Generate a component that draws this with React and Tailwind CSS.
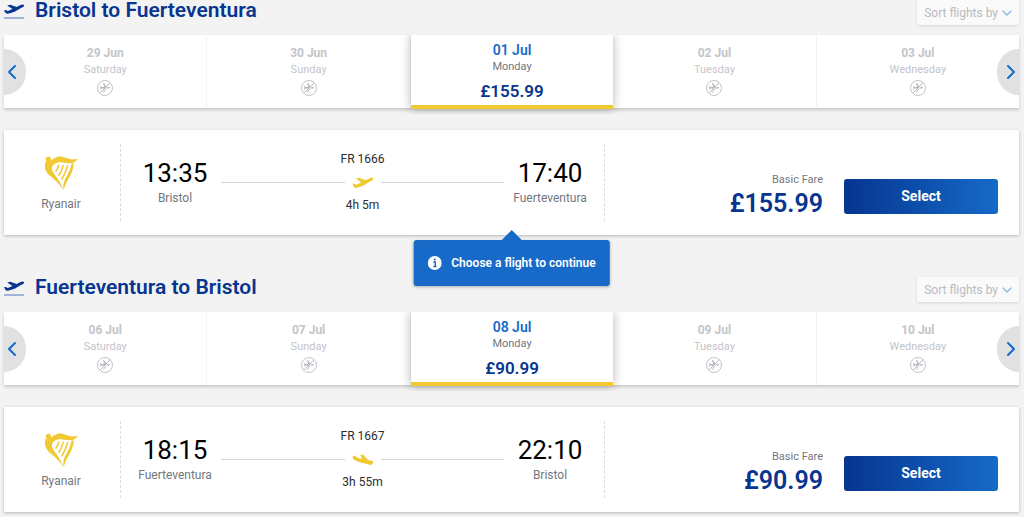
import { ChevronDown, ChevronLeft, ChevronRight } from "lucide-react";

const flights = [
  {
    id: "outbound",
    from: "Bristol",
    to: "Fuerteventura",
    number: "FR 1666",
    departs: "13:35",
    arrives: "17:40",
    duration: "4h 5m",
    price: "£155.99",
    hint: "Choose a flight to continue",
    days: [
      { date: "29 Jun", weekday: "Saturday" },
      { date: "30 Jun", weekday: "Sunday" },
      { date: "01 Jul", weekday: "Monday", price: "£155.99" },
      { date: "02 Jul", weekday: "Tuesday" },
      { date: "03 Jul", weekday: "Wednesday" },
    ],
  },
  {
    id: "inbound",
    from: "Fuerteventura",
    to: "Bristol",
    number: "FR 1667",
    departs: "18:15",
    arrives: "22:10",
    duration: "3h 55m",
    price: "£90.99",
    isReturn: true,
    days: [
      { date: "06 Jul", weekday: "Saturday" },
      { date: "07 Jul", weekday: "Sunday" },
      { date: "08 Jul", weekday: "Monday", price: "£90.99" },
      { date: "09 Jul", weekday: "Tuesday" },
      { date: "10 Jul", weekday: "Wednesday" },
    ],
  },
];

// planes are drawn on a 62 x 32 grid
const PLANE_UP =
  "M10 3l9-2 20 7 12-6c6-3 10-2 11 1 0 4-4 7-10 9L34 23c-9 4-18 7-25 8-3 0-4-2-5-4L0 19l5-1 7 4 14-7z";
const PLANE_DOWN =
  "M1 6l6-2 8 6 14 3-6-11 8-2 17 17 10 2c5 1 5 6 3 8-3 4-7 5-12 3L24 24C16 21 6 17 3 14 1 12 0 9 1 6z";

function TakeoffIcon() {
  return (
    <svg viewBox="0 0 20 20" className="h-5 w-5 shrink-0" aria-hidden="true">
      <path d={PLANE_UP} fill="#073590" transform="translate(0 4.5) scale(0.325 0.3)" />
      <path d="M0 18h20" stroke="#7d99cb" strokeWidth="1.4" />
    </svg>
  );
}

function RoutePlane({ isReturn }) {
  return (
    <svg viewBox="0 0 24 20" className="h-5 w-6" aria-hidden="true">
      <path
        d={isReturn ? PLANE_DOWN : PLANE_UP}
        fill="#f1c933"
        transform="translate(1.5 4.5) scale(0.335)"
      />
    </svg>
  );
}

function NoFlightIcon() {
  return (
    <svg viewBox="0 0 18 18" className="h-[18px] w-[18px]" fill="none" aria-hidden="true">
      <circle cx="9" cy="9" r="7.5" stroke="#c2c5ca" />
      <path
        d="M21 16v-2l-8-5V3.500c0-.83-.67-1.500-1.500-1.500S10 2.670 10 3.500V9l-8 5v2l8-2.500V19l-2 1.500V22l3.500-1 3.500 1v-1.500L13 19v-5.500l8 2.500z"
        fill="#b4b8be"
        transform="rotate(90 9 9) translate(3 3) scale(0.5)"
      />
      <path d="M4.300 15L14.800 4.500" stroke="#fff" />
      <path d="M3.700 14.300L14.300 3.700" stroke="#b4b8be" />
    </svg>
  );
}

function HarpLogo() {
  return (
    <svg viewBox="0 0 100 100" className="h-[34px] w-[34px]" fill="none" aria-hidden="true">
      <circle cx="13" cy="10" r="8" fill="#f1c933" />
      <path
        d="M14 15C26 12 30 4 42 2c17-2 27 8 42 8 6 0 10-1 15-2-4 9-14 14-27 13-16-1-27-6-37 0-8 4-12 9-12 16 0 13 22 29 34 63C47 84 36 74 22 62 8 51 1 38 3 28 2 20 5 15 14 15z"
        fill="#f1c933"
      />
      <path d="M88 22c-2 18-8 33-17 47-6 10-10 19-13 31-3-12-1-22 5-34 8-14 15-26 18-44z" fill="#f1c933" />
      <path
        d="M44 25c-2 8-5 14-10 21M57 26c-3 12-7 22-14 32M70 27c-4 16-10 28-18 42"
        stroke="#f1c933"
        strokeWidth="4.500"
      />
    </svg>
  );
}

function InfoIcon() {
  return (
    <svg viewBox="0 0 14 14" className="h-3.5 w-3.5 shrink-0" aria-hidden="true">
      <circle cx="7" cy="7" r="7" fill="#fff" />
      <path d="M5.500 6h2v4.500M5.500 10.500h3.200" stroke="#176ac8" strokeWidth="1.400" fill="none" />
      <circle cx="7" cy="3.500" r="1" fill="#176ac8" />
    </svg>
  );
}

function Day({ date, weekday, price }) {
  if (price) {
    return (
      <li className="relative z-10 flex-1 [clip-path:inset(0_-12px_-6px)]">
        <button
          type="button"
          aria-pressed="true"
          className="flex h-[74px] w-full flex-col items-center border-b-4 border-[#f1c933] bg-white pt-1.5 shadow-[0_0_10px_rgba(0,0,0,0.3)]"
        >
          <span className="text-sm leading-[18px] font-semibold text-[#176ac8]">{date}</span>
          <span className="text-[11px] leading-4 text-[#737780]">{weekday}</span>
          <span className="mt-1.5 text-[17px] leading-5 font-semibold text-[#073590]">{price}</span>
        </button>
      </li>
    );
  }

  return (
    <li className="flex-1 border-r border-[#f4f4f4] last:border-r-0">
      <button
        type="button"
        disabled
        className="flex h-[73px] w-full flex-col items-center pt-[9px]"
      >
        <span className="text-xs leading-[18px] font-bold text-[#c2c5ca]">{date}</span>
        <span className="text-[11px] leading-4 text-[#c2c5ca]">{weekday}</span>
        <span className="mt-px">
          <NoFlightIcon />
        </span>
      </button>
    </li>
  );
}

function DateCarousel({ days }) {
  return (
    <div className="relative bg-white shadow-[0_2px_3px_rgba(0,0,0,0.18)]">
      <ul className="flex h-[73px]">
        {days.map((day) => (
          <Day key={day.date} {...day} />
        ))}
      </ul>
      <button
        type="button"
        aria-label="Previous dates"
        className="absolute top-3.5 left-0 flex h-[46px] w-[22px] items-center rounded-r-full bg-[#dfe1e3]"
      >
        <ChevronLeft className="-ml-1 h-6 w-6 shrink-0 text-[#176ac8]" strokeWidth={2} />
      </button>
      <button
        type="button"
        aria-label="Next dates"
        className="absolute top-3.5 right-0 flex h-[46px] w-[22px] items-center justify-end rounded-l-full bg-[#dfe1e3]"
      >
        <ChevronRight className="-mr-1 h-6 w-6 shrink-0 text-[#176ac8]" strokeWidth={2} />
      </button>
    </div>
  );
}

function Stop({ time, city }) {
  return (
    <div className="flex w-[92px] shrink-0 flex-col items-center pb-0.5">
      <span className="text-[26px] leading-[30px] text-black">{time}</span>
      <span className="mt-0.5 text-xs leading-4 text-[#737780]">{city}</span>
    </div>
  );
}

function FlightCard({ flight }) {
  return (
    <article className="relative flex h-[105px] bg-white py-3.5 shadow-[0_1px_3px_rgba(0,0,0,0.25)]">
      <div className="flex w-[117px] shrink-0 flex-col items-center border-r border-dashed border-[#dcdcdc] pt-3 pr-0.5">
        <HarpLogo />
        <span className="mt-1.5 text-xs leading-4 text-[#737780]">Ryanair</span>
      </div>

      <div className="flex flex-1 items-center border-r border-dashed border-[#dcdcdc] px-2">
        <Stop time={flight.departs} city={flight.from} />
        <div className="flex flex-1 flex-col items-center pb-0.5 text-xs leading-4 text-[#2b2d31]">
          <span>{flight.number}</span>
          <div className="mt-1.5 mb-1 flex w-full items-center gap-1.5">
            <span className="h-px flex-1 bg-[#d5d5d5]" />
            <RoutePlane isReturn={flight.isReturn} />
            <span className="h-px flex-1 bg-[#d5d5d5]" />
          </div>
          <span>{flight.duration}</span>
        </div>
        <Stop time={flight.arrives} city={flight.to} />
      </div>

      <div className="flex w-[414px] shrink-0 items-start justify-end gap-[21px] pr-[21px]">
        <div className="flex flex-col items-end pt-7">
          <span className="text-[11px] leading-4 text-[#737780]">Basic Fare</span>
          <span className="text-[25px] leading-8 font-semibold text-[#073590]">{flight.price}</span>
        </div>
        <button
          type="button"
          className="mt-[35px] h-[35px] w-[154px] rounded-[3px] bg-linear-to-r from-[#073590] to-[#176ac8] pb-0.5 text-sm font-bold text-white"
        >
          Select
        </button>
      </div>

      {flight.hint && (
        <div
          role="tooltip"
          className="absolute top-full left-1/2 z-20 mt-[5px] flex h-[46px] -translate-x-1/2 items-center gap-2.5 rounded-[3px] bg-[#176ac8] px-3.5 text-xs font-semibold whitespace-nowrap text-white shadow-[0_1px_3px_rgba(0,0,0,0.3)]"
        >
          <svg
            viewBox="0 0 20 10"
            className="absolute bottom-full left-1/2 h-2.5 w-5 -translate-x-1/2"
            aria-hidden="true"
          >
            <path d="M0 10L10 0l10 10z" fill="#176ac8" />
          </svg>
          <InfoIcon />
          {flight.hint}
        </div>
      )}
    </article>
  );
}

function Journey({ flight }) {
  return (
    <section>
      <header className="flex h-[35px] items-start justify-between">
        <div className="flex items-start gap-[11px]">
          <TakeoffIcon />
          <h2 className="text-[21px] leading-5 font-semibold text-[#073590]">
            {flight.from} to {flight.to}
          </h2>
        </div>
        <button
          type="button"
          className="flex h-[25px] items-center gap-px rounded-[2px] bg-[#fafafa] pr-1 pl-[7px] text-xs text-[#b9bbbf] shadow-[0_1px_3px_rgba(0,0,0,0.12)]"
        >
          Sort flights by
          <ChevronDown className="h-4 w-4 text-[#8bb5e4]" strokeWidth={2} />
        </button>
      </header>
      <DateCarousel days={flight.days} />
      <div className="mt-[22px]">
        <FlightCard flight={flight} />
      </div>
    </section>
  );
}

export default function App() {
  return (
    <main className="flex min-h-screen flex-col gap-[42px] bg-[#f3f3f3] pr-[5px] pb-[5px] pl-1 font-[Roboto,sans-serif]">
      {flights.map((flight) => (
        <Journey key={flight.id} flight={flight} />
      ))}
    </main>
  );
}
